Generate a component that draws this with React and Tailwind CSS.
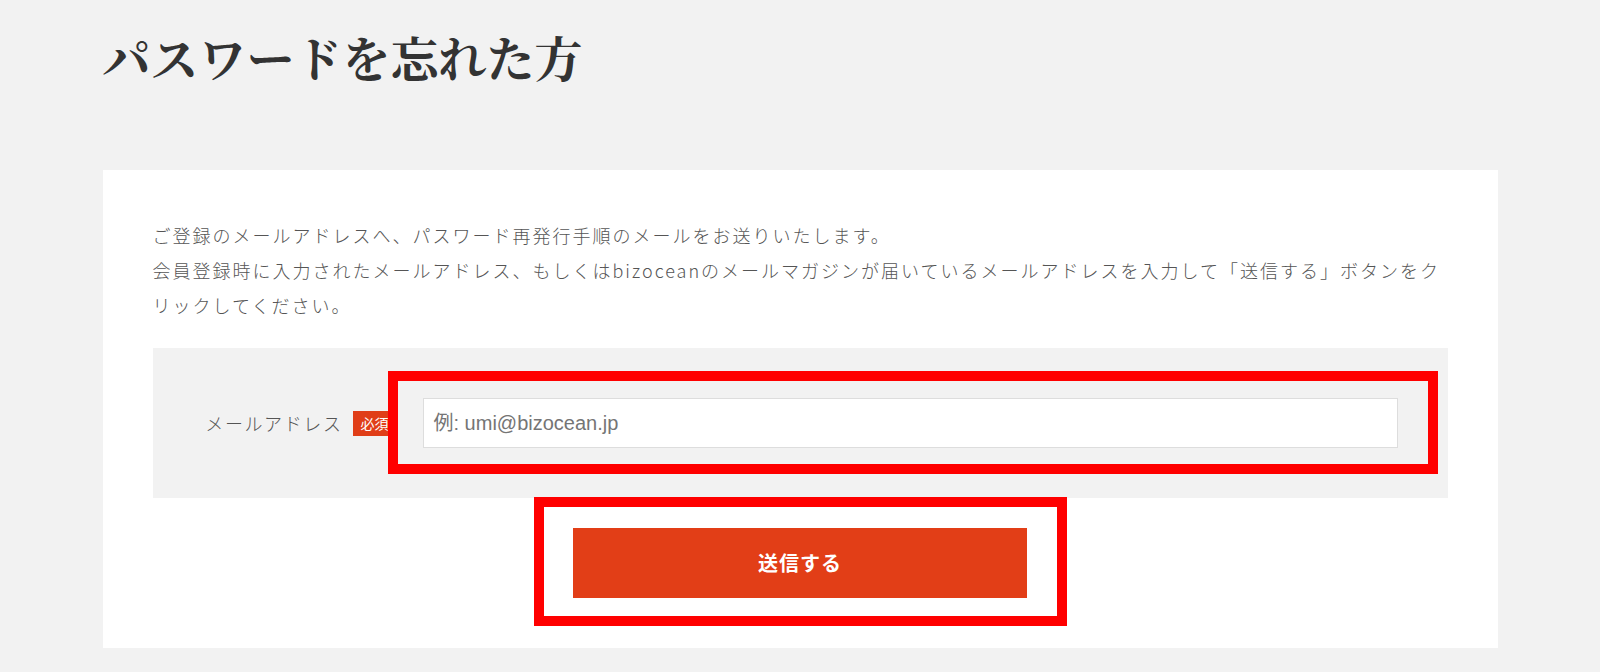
import React from "react";

const jp = { fontFamily: '"Noto Sans CJK JP", "Noto Sans", sans-serif' };
const titleFont = { fontFamily: '"Noto Serif CJK JP", "Noto Sans CJK JP", serif' };
const inputFont = { fontFamily: '"Liberation Sans", "Noto Sans CJK JP", sans-serif' };

export default function App() {
  return (
    <div className="min-h-screen w-full bg-[#f2f2f2] pt-[33px] pb-[24px]" style={jp}>
      <div className="mx-auto w-[1395px]">
        <h1
          className="text-[48px] leading-[48px] font-bold text-[#333333] mb-[89px]"
          style={titleFont}
        >
          パスワードを忘れた方
        </h1>

        <div className="bg-white px-[50px] pt-[48px] pb-[50px]">
          <p className="text-[18px] leading-[35px] tracking-[2px] font-light text-[#555555]">
            ご登録のメールアドレスへ、パスワード再発行手順のメールをお送りいたします。
            <br />
            会員登録時に入力されたメールアドレス、もしくはbizoceanのメールマガジンが届いているメールアドレスを入力して「送信する」ボタンをクリックしてください。
          </p>

          <div className="relative mt-[25px] h-[150px] bg-[#f2f2f2] flex items-center pr-[50px]">
            <div className="w-[270px] flex items-center justify-end pr-[26px]">
              <span className="text-[18px] tracking-[1.6px] font-light text-[#555555]">メールアドレス</span>
              <span className="ml-[10px] h-[25px] w-[44px] flex items-center justify-center bg-[#e03e18] text-white text-[14px] leading-none">
                必須
              </span>
            </div>
            <div className="flex-1 h-[50px] bg-white border border-[#dddddd] flex items-center px-[10px]">
              <span className="text-[20px] text-[#757575]" style={inputFont}>
                例: umi@bizocean.jp
              </span>
            </div>
            <div className="absolute left-[235px] top-[23px] w-[1050px] h-[103px] border-[10px] border-[#ff0000] pointer-events-none" />
          </div>

          <div className="mt-[30px] flex justify-center">
            <div className="relative">
              <button className="w-[454px] h-[70px] bg-[#e23e17] text-white text-[20px] font-bold tracking-[1px] flex items-center justify-center">
                送信する
              </button>
              <div className="absolute -left-[39px] -right-[40px] -top-[31px] -bottom-[28px] border-[10px] border-[#ff0000] pointer-events-none" />
            </div>
          </div>
        </div>
      </div>
    </div>
  );
}
